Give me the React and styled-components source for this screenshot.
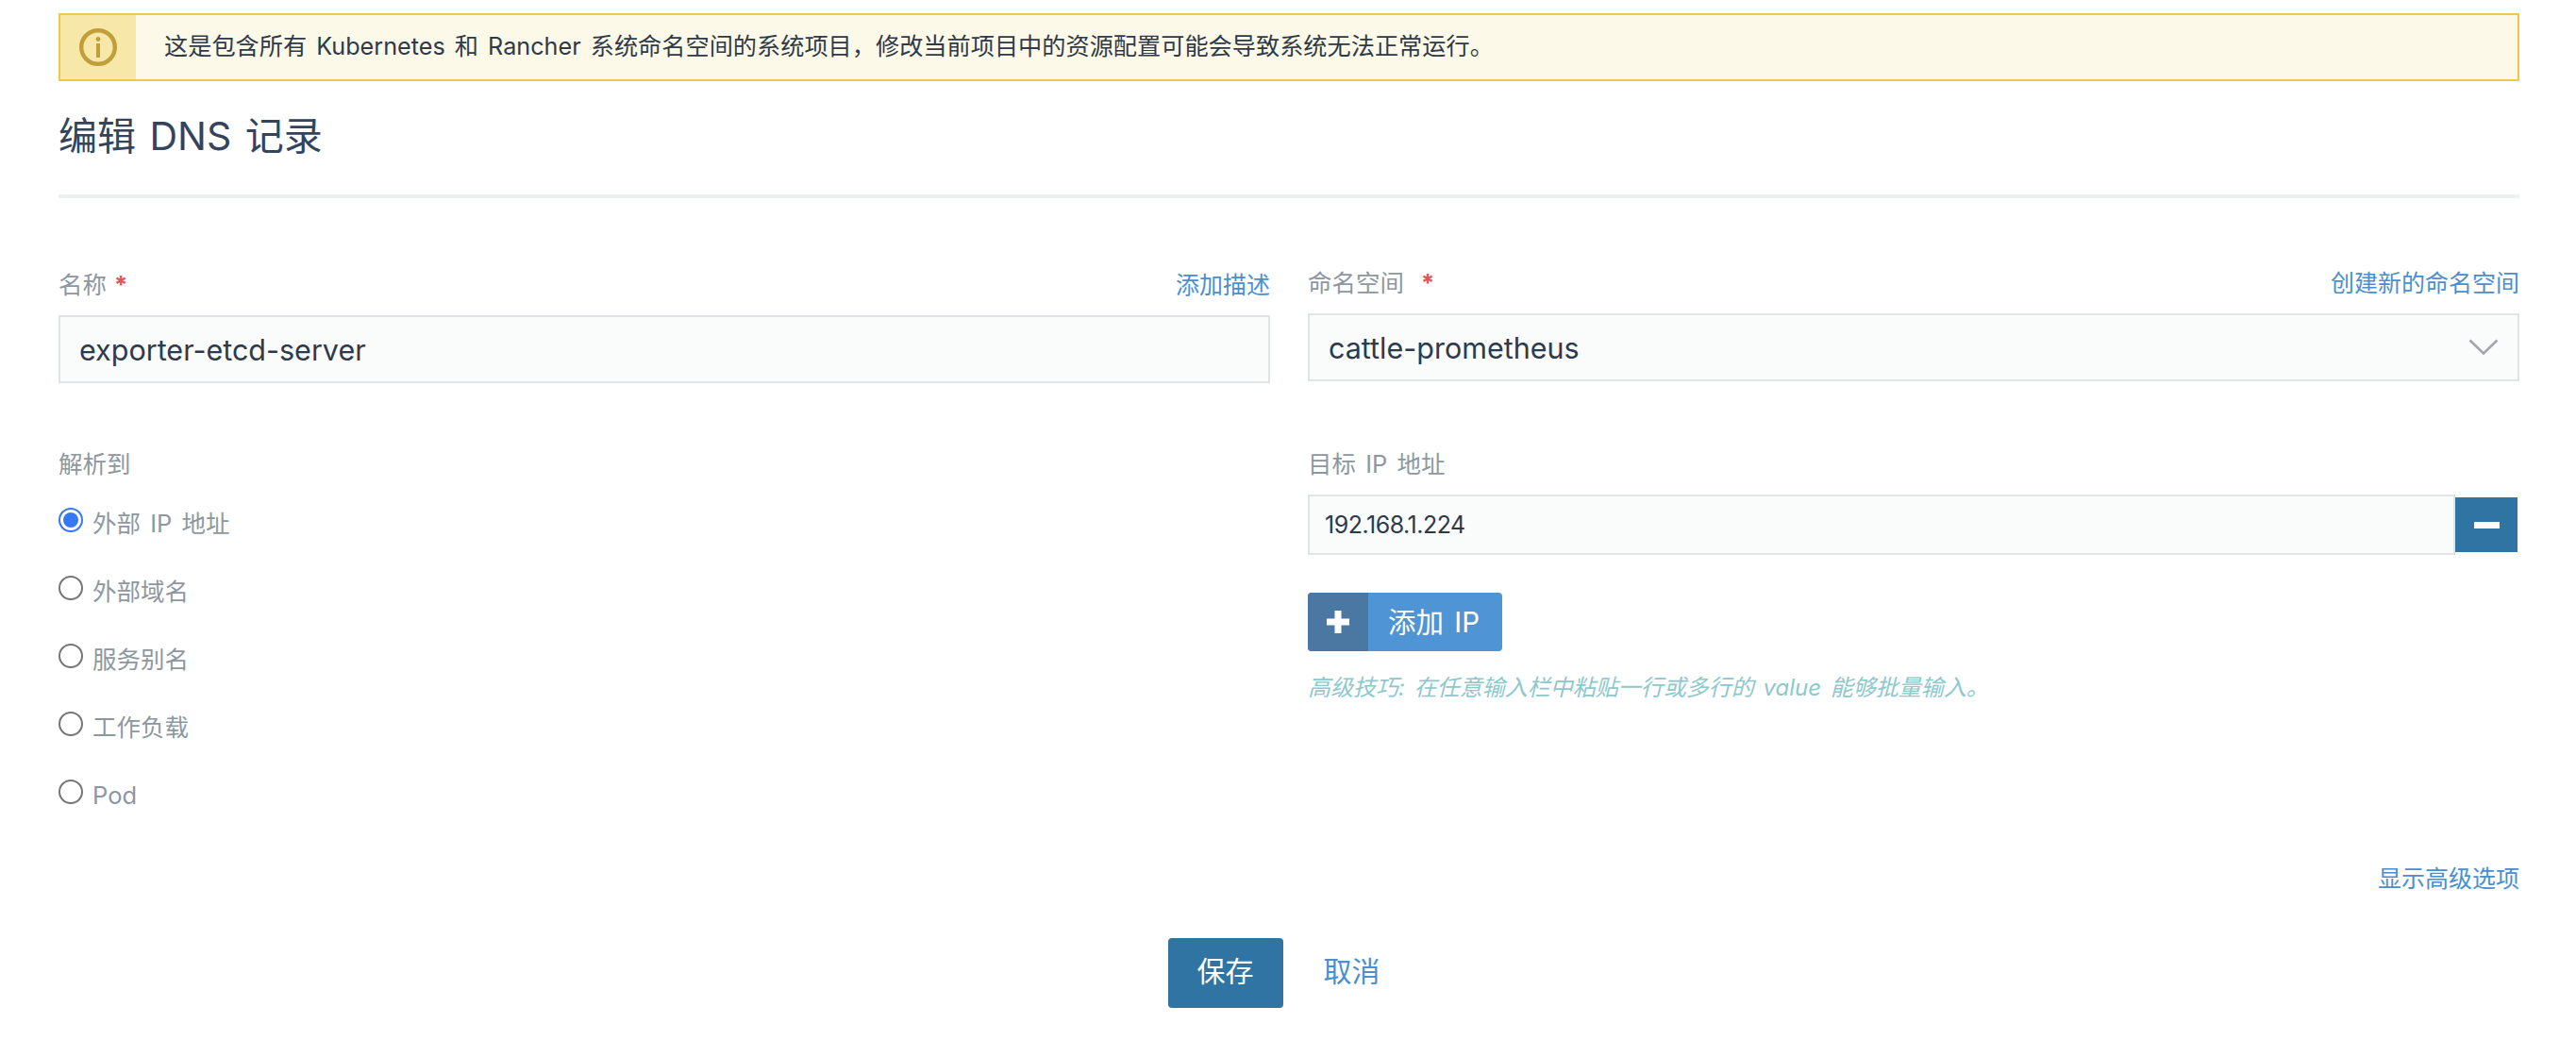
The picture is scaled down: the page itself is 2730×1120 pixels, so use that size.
import React from "react";
import styled, { createGlobalStyle } from "styled-components";

const Global = createGlobalStyle`
  html, body { margin: 0; padding: 0; background: #fff; }
  body { font-family: Inter, "Noto Sans CJK SC", sans-serif; color: #2d3a4c; }
  * { box-sizing: border-box; }
`;

const Page = styled.div`
  padding: 14px 60px 0 62px;
  height: 1120px;
  overflow: hidden;
`;

const Banner = styled.div`
  display: flex;
  align-items: center;
  height: 72px;
  border: 2px solid #ecc84e;
  background: #fdf9e9;
  font-size: 25.2px;
  color: #2f3a48;
`;

const BannerIcon = styled.div`
  flex: 0 0 80px;
  align-self: stretch;
  display: flex;
  align-items: center;
  justify-content: center;
  background: #f7e8a9;
`;

const BannerText = styled.div`
  margin-left: 30px;
  padding-bottom: 6px;
  word-spacing: 3px;
`;

const Header = styled.div`
  height: 124px;
  display: flex;
  align-items: center;
  border-bottom: 4px solid #eef1f1;
`;

const Title = styled.h1`
  margin: 0 0 4px;
  font-size: 41px;
  font-weight: 400;
  line-height: 48px;
  color: #33445c;
  word-spacing: 3px;
`;

const FormGrid = styled.div`
  display: grid;
  grid-template-columns: 1fr 1fr;
  column-gap: 40px;
  padding-top: ${(p) => p.$top}px;
`;

const Field = styled.div`
  padding-top: ${(p) => p.$offset || 0}px;
`;

const LabelRow = styled.div`
  display: flex;
  justify-content: space-between;
  align-items: flex-start;
  height: 30px;
  line-height: 24px;
  margin-bottom: ${(p) => p.$gap}px;
`;

const Label = styled.div`
  font-size: 25.5px;
  color: #8d979f;
  word-spacing: 3px;
`;

const Star = styled.span`
  color: #e0555a;
  font-weight: 700;
  margin-left: ${(p) => p.$gap}px;
`;

const Link = styled.a`
  font-size: 25px;
  color: #4a8fcf;
  text-decoration: none;
`;

const TextBox = styled.div`
  display: flex;
  align-items: center;
  height: 72px;
  padding: 0 20px;
  border: 2px solid #dfe4e7;
  background: #fafbfb;
  font-size: 30.5px;
  color: #2d3a4c;
`;

const SelectBox = styled(TextBox)`
  justify-content: space-between;
  padding-right: 20px;
`;

const RadioList = styled.div`
  display: flex;
  flex-direction: column;
  gap: 40px;
  margin-top: 28px;
`;

const RadioRow = styled.label`
  display: flex;
  align-items: flex-start;
  gap: 10px;
  height: 32px;
  line-height: 34px;
  font-size: 25.5px;
  color: #8d979f;
  word-spacing: 3px;
`;

const RadioMark = styled.span`
  flex: 0 0 26px;
  width: 26px;
  height: 26px;
  border-radius: 50%;
  display: flex;
  align-items: center;
  justify-content: center;
  background: #fff;
  border: ${(p) => (p.$checked ? "2.5px solid #3478f6" : "2px solid #767676")};

  &::after {
    content: "";
    display: ${(p) => (p.$checked ? "block" : "none")};
    width: 16px;
    height: 16px;
    border-radius: 50%;
    background: #3478f6;
  }
`;

const IpRow = styled.div`
  display: flex;
  align-items: center;
`;

const IpBox = styled(TextBox)`
  flex: 1;
  height: 64px;
  padding: 0 16px;
  font-size: 25px;
  letter-spacing: -0.5px;
`;

const RemoveButton = styled.button`
  flex: 0 0 66px;
  height: 58px;
  margin-right: 2px;
  padding: 0;
  border: 0;
  background: #3074a4;
  display: flex;
  align-items: center;
  justify-content: center;
`;

const AddButton = styled.button`
  display: flex;
  align-items: stretch;
  height: 62px;
  width: 206px;
  margin-top: 40px;
  padding: 0;
  border: 0;
  border-radius: 4px;
  overflow: hidden;
  background: #4f94d4;
  color: #fff;
  font-family: inherit;
  font-size: 29.5px;
  word-spacing: 3px;
`;

const AddIcon = styled.span`
  flex: 0 0 64px;
  background: #4a78a3;
  display: flex;
  align-items: center;
  justify-content: center;
`;

const AddLabel = styled.span`
  align-self: center;
  margin-left: 21px;
  padding-bottom: 5px;
`;

const Hint = styled.div`
  margin-top: 24px;
  line-height: 30px;
  font-size: 24px;
  font-style: italic;
  color: #8dc8cc;
  word-spacing: 3px;
`;

const AdvancedRow = styled.div`
  display: flex;
  justify-content: flex-end;
  line-height: 30px;
  margin-top: 58px;
`;

const Actions = styled.div`
  display: flex;
  justify-content: center;
  align-items: center;
  gap: 43px;
  margin-top: 48px;
  padding-right: 32px;
`;

const SaveButton = styled.button`
  width: 122px;
  height: 74px;
  padding: 0 0 8px;
  border: 0;
  border-radius: 4px;
  background: #3074a4;
  color: #fff;
  font-family: inherit;
  font-size: 30px;
`;

const CancelLink = styled(Link)`
  font-size: 30px;
  padding-bottom: 8px;
`;

const InfoIcon = () => (
  <svg width="40" height="40" viewBox="0 0 40 40" fill="none" stroke="#c19e38">
    <circle cx="20" cy="20" r="17.8" strokeWidth="4.4" />
    <circle cx="20" cy="11.5" r="2.4" fill="#c19e38" stroke="none" />
    <rect x="18" y="16" width="4" height="15" fill="#c19e38" stroke="none" />
  </svg>
);

const Chevron = () => (
  <svg width="32" height="18" viewBox="0 0 32 18" fill="none" stroke="#a3a8ab" strokeWidth="2.6">
    <path d="M1.5 1.5 L16 15.5 L30.5 1.5" />
  </svg>
);

const Minus = () => (
  <svg width="27" height="7" viewBox="0 0 27 7">
    <rect width="27" height="7" fill="#fff" />
  </svg>
);

const Plus = () => (
  <svg width="24" height="24" viewBox="0 0 24 24">
    <path d="M8.5 0h7v8.5H24v7h-8.5V24h-7v-8.5H0v-7h8.5z" fill="#fff" />
  </svg>
);

const targets = ["外部 IP 地址", "外部域名", "服务别名", "工作负载", "Pod"];

export default function App() {
  return (
    <>
      <Global />
      <Page>
        <Banner>
          <BannerIcon>
            <InfoIcon />
          </BannerIcon>
          <BannerText>
            {"这是包含所有 Kubernetes 和 Rancher 系统命名空间的系统项目\uFF0C修改当前项目中的资源配置可能会导致系统无法正常运行。"}
          </BannerText>
        </Banner>
        <Header>
          <Title>编辑 DNS 记录</Title>
        </Header>
        <FormGrid $top={78}>
          <Field $offset={2}>
            <LabelRow $gap={14}>
              <Label>
                名称<Star $gap={8}>*</Star>
              </Label>
              <Link>添加描述</Link>
            </LabelRow>
            <TextBox>exporter-etcd-server</TextBox>
          </Field>
          <Field>
            <LabelRow $gap={14}>
              <Label>
                命名空间<Star $gap={18}>*</Star>
              </Label>
              <Link>创建新的命名空间</Link>
            </LabelRow>
            <SelectBox>
              cattle-prometheus
              <Chevron />
            </SelectBox>
          </Field>
        </FormGrid>
        <FormGrid $top={74}>
          <Field>
            <LabelRow $gap={0}>
              <Label>解析到</Label>
            </LabelRow>
            <RadioList>
              {targets.map((t, i) => (
                <RadioRow key={t}>
                  <RadioMark $checked={i === 0} />
                  {t}
                </RadioRow>
              ))}
            </RadioList>
          </Field>
          <Field>
            <LabelRow $gap={14}>
              <Label>目标 IP 地址</Label>
            </LabelRow>
            <IpRow>
              <IpBox>192.168.1.224</IpBox>
              <RemoveButton aria-label="remove">
                <Minus />
              </RemoveButton>
            </IpRow>
            <AddButton>
              <AddIcon>
                <Plus />
              </AddIcon>
              <AddLabel>添加 IP</AddLabel>
            </AddButton>
            <Hint>高级技巧: 在任意输入栏中粘贴一行或多行的 value 能够批量输入。</Hint>
          </Field>
        </FormGrid>
        <AdvancedRow>
          <Link>显示高级选项</Link>
        </AdvancedRow>
        <Actions>
          <SaveButton>保存</SaveButton>
          <CancelLink>取消</CancelLink>
        </Actions>
      </Page>
    </>
  );
}
